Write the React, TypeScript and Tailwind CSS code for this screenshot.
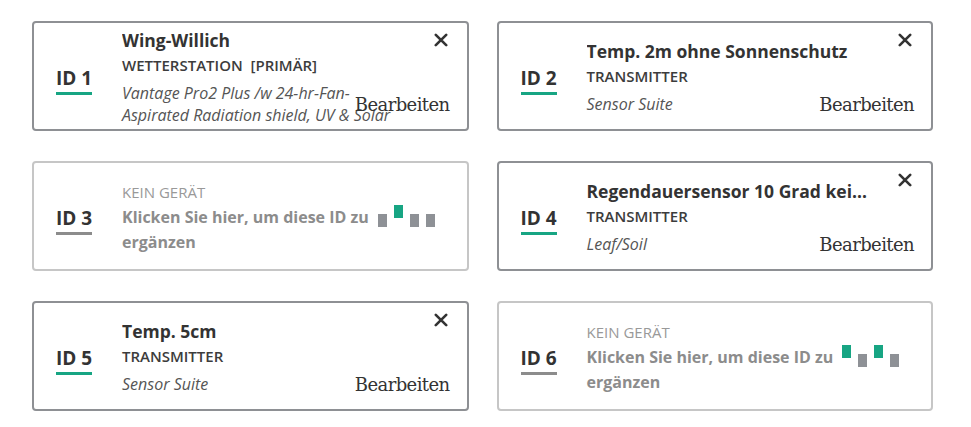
import React from 'react';

type Slot = {
  id: number;
  name?: string;
  kind?: string;
  model?: string;
  dots?: boolean[];
};

const SLOTS: Slot[] = [
  { id: 1, name: 'Wing-Willich', kind: 'WETTERSTATION\u00a0\u00a0[PRIMÄR]', model: 'Vantage Pro2 Plus /w 24-hr-Fan-Aspirated Radiation shield, UV & Solar' },
  { id: 2, name: 'Temp. 2m ohne Sonnenschutz', kind: 'TRANSMITTER', model: 'Sensor Suite' },
  { id: 3, dots: [false, true, false, false] },
  { id: 4, name: 'Regendauersensor 10 Grad keine Heizung', kind: 'TRANSMITTER', model: 'Leaf/Soil' },
  { id: 5, name: 'Temp. 5cm', kind: 'TRANSMITTER', model: 'Sensor Suite' },
  { id: 6, dots: [true, false, true, false] },
];

function CloseIcon() {
  return (
    <svg width="14" height="14" viewBox="0 0 14 14" fill="none" stroke="#333" strokeWidth="2.6" strokeLinecap="round">
      <path d="M1.8 1.8 12.2 12.2M12.2 1.8 1.8 12.2" />
    </svg>
  );
}

function SlotCard({ slot }: { slot: Slot }) {
  const empty = !slot.name;
  return (
    <div className={`relative flex h-[110px] items-center rounded-[4px] border-2 bg-white pl-[22px] ${empty ? 'border-[#c6c6c6]' : 'border-[#8e9094]'}`}>
      <div className="mt-[10px] w-[66px] shrink-0">
        <span className={`inline-block border-b-[3px] pb-[3px] text-[19px] font-bold leading-[22px] text-[#333] ${empty ? 'border-[#8c8c8c]' : 'border-[#17a583]'}`}>
          ID {slot.id}
        </span>
      </div>
      {empty ? (
        <div className="w-[340px] pt-[2px]">
          <p className="text-[15px] leading-[25px] text-[#999]">KEIN GERÄT</p>
          <p className="text-[16px] font-bold leading-[25px] text-[#8c8c8c]">
            Klicken Sie hier, um diese ID zu
            <span className="ml-[9px] inline-flex gap-[7px] align-[-4px]">
              {slot.dots!.map((up, i) => (
                <span key={i} className={`block h-[13px] w-[9px] ${up ? '-translate-y-[9px] bg-[#17a583]' : 'bg-[#8e9196]'}`} />
              ))}
            </span>{' '}
            ergänzen
          </p>
        </div>
      ) : (
        <>
          <div className="w-[284px] pt-[1px]">
            <p className="truncate text-[17.5px] font-bold leading-[24px] text-[#333]">{slot.name}</p>
            <p className="mt-[1px] text-[15px] font-semibold leading-[24px] text-[#3c3c3c]">{slot.kind}</p>
            <p className="mt-[5px] text-[16px] italic leading-[22px] text-[#555]">{slot.model}</p>
          </div>
          <button className="absolute right-[19px] top-[10px]"><CloseIcon /></button>
          <span className="absolute bottom-[14px] right-[17px] font-['DejaVu_Serif',serif] text-[18px] leading-[20px] tracking-[-0.6px] text-[#333]">Bearbeiten</span>
        </>
      )}
    </div>
  );
}

export default function App() {
  return (
    <div className="min-h-screen bg-white pl-[32px] pr-[38px] pt-[21px] font-['Open_Sans',sans-serif]">
      <div className="grid grid-cols-2 gap-x-[28px] gap-y-[30px]">
        {SLOTS.map((slot) => <SlotCard key={slot.id} slot={slot} />)}
      </div>
    </div>
  );
}
